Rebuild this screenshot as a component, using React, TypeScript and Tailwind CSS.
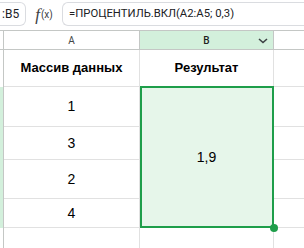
import React from "react";

const line = "border-[#e1e1e1]";

export default function App() {
  return (
    <div className="w-[304px] h-[248px] bg-white overflow-hidden relative" style={{ fontFamily: '"Liberation Sans", Arial, sans-serif' }}>
      {/* toolbar */}
      <div className="h-[30px] flex items-start pt-[2px]" style={{ fontFamily: 'Roboto, "Liberation Sans", sans-serif' }}>
        <div className="w-[26px] h-[24px] border border-l-0 border-[#dadce0] rounded-r-[6px] flex items-center pl-[2px] text-[12px] text-[#202124]">:B5</div>
        <div className="w-[36px] h-[24px] flex items-center justify-center text-[#3c4043]">
          <span className="italic text-[17px] leading-none" style={{ fontFamily: '"Liberation Serif", serif' }}>f</span>
          <span className="text-[10px] leading-none ml-[1px] mt-[2px]">(x)</span>
        </div>
        <div className="flex-1 h-[24px] border border-r-0 border-[#dadce0] rounded-l-[6px] flex items-center pl-[6px] text-[11.3px] text-[#202124] whitespace-nowrap">
          =ПРОЦЕНТИЛЬ.ВКЛ(A2:A5; 0,3)
        </div>
      </div>
      {/* grid */}
      <div className="grid grid-cols-[4px_136px_134px_1fr] grid-rows-[20px_37px_40px_33px_39px_29px_1fr] h-[218px]">
        {/* header row */}
        <div className="border-t border-b border-r border-[#c4c7c5] bg-white" />
        <div className="border-t border-b border-r border-[#c4c7c5] bg-white flex items-center justify-center text-[10px] text-[#444746]" style={{ fontFamily: 'Roboto, sans-serif' }}>A</div>
        <div className="border-t border-b border-r border-[#c4c7c5] bg-[#d3f0dc] flex items-center justify-center relative text-[10px] font-medium text-[#1f1f1f]" style={{ fontFamily: 'Roboto, sans-serif' }}>
          B
          <svg className="absolute right-[5px] top-[7px]" width="10" height="6" viewBox="0 0 10 6">
            <path d="M1 1 L5 4.5 L9 1" fill="none" stroke="#3c4043" strokeWidth="1.6" />
          </svg>
        </div>
        <div className="border-t border-b border-[#c4c7c5] bg-white" />

        {/* row 1 */}
        <div className={`border-r border-[#c4c7c5] bg-white`} />
        <div className={`border-r border-b ${line} flex items-center justify-center font-bold text-[13px] text-[#000]`}>Массив данных</div>
        <div className={`border-r border-b ${line} flex items-center justify-center font-bold text-[13px] text-[#000]`}>Результат</div>
        <div className={`border-b ${line}`} />

        {/* data rows A */}
        <div className="row-start-3 col-start-1 border-r border-[#c4c7c5] bg-[#d3f0dc]" />
        <div className={`row-start-3 col-start-2 border-r border-b ${line} flex items-center justify-center text-[14px] text-[#000]`}>1</div>
        <div className={`row-start-3 col-start-4 border-b ${line}`} />

        <div className="row-start-4 col-start-1 border-r border-[#c4c7c5] bg-[#d3f0dc]" />
        <div className={`row-start-4 col-start-2 border-r border-b ${line} flex items-center justify-center text-[14px] text-[#000]`}>3</div>
        <div className={`row-start-4 col-start-4 border-b ${line}`} />

        <div className="row-start-5 col-start-1 border-r border-[#c4c7c5] bg-[#d3f0dc]" />
        <div className={`row-start-5 col-start-2 border-r border-b ${line} flex items-center justify-center text-[14px] text-[#000]`}>2</div>
        <div className={`row-start-5 col-start-4 border-b ${line}`} />

        <div className="row-start-6 col-start-1 border-r border-[#c4c7c5] bg-[#d3f0dc]" />
        <div className={`row-start-6 col-start-2 border-r border-b ${line} flex items-center justify-center text-[14px] text-[#000]`}>4</div>
        <div className={`row-start-6 col-start-4 border-b ${line}`} />

        {/* merged result cell */}
        <div className={`row-start-3 row-end-7 col-start-3 border-r border-b ${line} relative bg-[#e6f6ea] flex items-center justify-center text-[14px] text-[#000]`}>
          1,9
          <div className="absolute -top-[1px] left-0 -right-[1px] -bottom-[1px] border-2 border-[#1e9e4a]" />
          <div className="absolute -right-[5px] -bottom-[5px] w-[8px] h-[8px] rounded-full bg-[#1e9e4a]" />
        </div>

        {/* row 6 */}
        <div className="row-start-7 col-start-1 border-r border-[#c4c7c5] bg-white" />
        <div className={`row-start-7 col-start-2 border-r ${line}`} />
        <div className={`row-start-7 col-start-3 border-r ${line}`} />
        <div className="row-start-7 col-start-4" />
      </div>
    </div>
  );
}
